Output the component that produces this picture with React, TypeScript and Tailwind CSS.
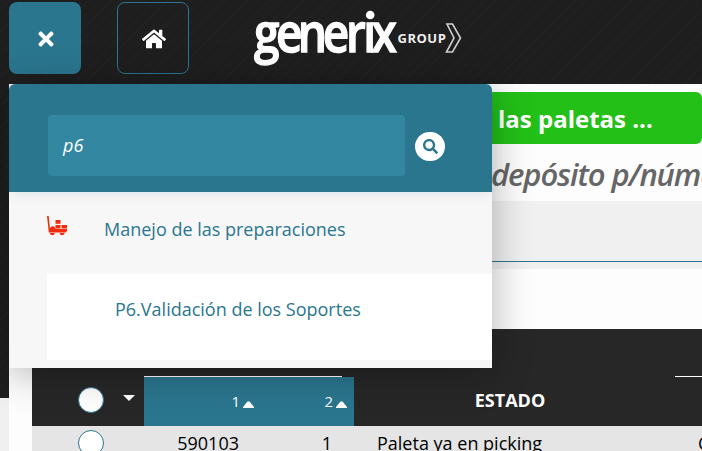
import { FaHome, FaSearch, FaTimes } from "react-icons/fa";

const stripes =
  "bg-[#1e1e1e] bg-[repeating-linear-gradient(135deg,#1e1e1e_0px,#1e1e1e_6px,#222222_7px,#1e1e1e_8px)]";

function Logo() {
  return (
    <svg className="ml-[61px] mt-2 h-[60px] w-[216px]" viewBox="250 8 216 60" fill="#fff" fontFamily="'Open Sans', sans-serif">
      <text
        transform="translate(254 52) scale(.86 1)"
        x="0 25.5 51 80 107 127 136.5"
        fontSize="53.5"
        fontWeight="600"
        stroke="#fff"
        strokeWidth="1.3"
      >
        generıx
      </text>
      <circle cx="370.2" cy="15" r="4.3" />
      <text transform="translate(397.5 42.5)" fontSize="13" fontWeight="700" letterSpacing="0.5" fill="#eee">GROUP</text>
      <path d="M447 24h5.500l8 14-8 14h-6l7.500-14z" fill="none" stroke="#d0d0d0" strokeWidth="1.6" />
    </svg>
  );
}

function Cart() {
  return (
    <svg className="h-5 w-5 shrink-0" viewBox="0 0 20 20" fill="#f02c0c">
      <path d="M0 0h1.700l1.200 12 2-1.700 2.300.2 1.600 2.500H20v2l-1.500 1.500H1.800z" />
      <path d="M8.500 4h5v3.700h-5zM8.500 9h5v3.400h-5zM14.500 9H20v3.400h-5.500z" />
      <path d="M2.800 17h5c-.5 3-4.500 3-5 0M12.600 17h5c-.5 3-4.500 3-5 0" />
    </svg>
  );
}

function Sort() {
  return (
    <svg className="ml-[3px] mt-[6px] h-[7px] w-[11px]" viewBox="0 0 11 7" fill="#fff">
      <path d="M0 7V6L4.500.5h2L11 6v1z" />
    </svg>
  );
}

function Menu() {
  return (
    <div className="absolute left-[9px] top-[84px] z-10 h-[284px] w-[483px] rounded-t-md bg-[#f7f7f7] text-[18px] text-[#2a768f] shadow-[0_5px_40px_rgba(0,0,0,0.3)]">
      <div className="flex h-[108px] items-start rounded-t-md bg-[#2a768f] pl-[39px] pt-[31px] shadow-[0_4px_14px_-4px_rgba(42,118,143,0.18)]">
        <div className="flex h-[61px] w-[357px] items-center rounded bg-[#3487a1] pl-[15px] font-medium italic text-white">p6</div>
        <div className="ml-2.5 mt-[17px] flex h-[29px] w-[30px] items-center justify-center rounded-full bg-white">
          <FaSearch size={15} />
        </div>
      </div>
      <div className="flex h-[82px] items-start pl-[38px] pt-6">
        <Cart />
        <div className="ml-[37px] leading-[27px]">Manejo de las preparaciones</div>
      </div>
      <div className="ml-[38px] h-[86px] bg-white pl-[68px] pt-[22px] leading-[27px]">P6.Validación de los Soportes</div>
    </div>
  );
}

export default function App() {
  return (
    <div className="relative h-[451px] w-[702px] overflow-hidden bg-[#f0f0f0] font-['Open_Sans',sans-serif]">
      <header className={`flex h-[84px] items-start ${stripes}`}>
        <button className="ml-[9px] mt-0.5 flex size-[72px] items-center justify-center rounded-lg bg-[#2a768f] pl-px pt-0.5 text-white">
          <FaTimes size={22} />
        </button>
        <button className="ml-9 mt-0.5 flex size-[72px] items-center justify-center rounded-lg border border-[#2a768f] pl-px pt-0.5 text-white">
          <FaHome size={24} />
        </button>
        <Logo />
      </header>
      <div className="flex">
        <div className={`h-[314px] w-[9px] shrink-0 ${stripes}`} />
        <main className="h-[367px] w-[693px] overflow-hidden bg-[#fdfdfd] pt-2">
          <div className="ml-4 flex h-[52px] items-center whitespace-nowrap rounded-md bg-[#23c018] pl-[473px] pt-0.5 text-2xl font-bold text-white">las paletas ...</div>
          <div className="h-[57px] whitespace-nowrap pl-[482px] pt-[6px] text-[31px] font-[550] italic leading-[48px] tracking-[-1.1px] text-[#666]">depósito p/número</div>
          <div className="h-[68px] bg-[#f0f0f0] pt-[60px]">
            <div className="h-px bg-[#2a768f]" />
          </div>
          <div className="ml-[23px] mt-[60px] h-[97px] bg-[#272727] pt-[47px] text-white">
            <div className="flex h-px">
              <div className="ml-[112px] w-[198px] bg-white" />
              <div className="ml-[333px] w-[27px] bg-white" />
            </div>
            <div className="flex h-[49px]">
              <div className="flex w-[112px] items-start pl-[46px] pt-2.5">
                <div className="size-[26px] rounded-full border border-[#2a768f] bg-white" />
                <svg className="ml-[19px] mt-2 h-1.5 w-3" viewBox="0 0 12 6" fill="#fff"><path d="M0 0h12L6 6z" /></svg>
              </div>
              <div className="flex w-[210px] items-center bg-[#2a768f] text-[15px]">
                <div className="flex w-[110px] items-center justify-end">1<Sort /></div>
                <div className="flex w-[93px] items-center justify-end">2<Sort /></div>
              </div>
              <div className="flex w-[312px] items-center justify-center pb-0.5 text-[18px] font-bold">ESTADO</div>
            </div>
          </div>
          <div className="ml-[23px] flex h-10 bg-[#e5e5e5] text-[18px] leading-[27px] text-black">
            <div className="w-[112px] shrink-0 pl-[46px] pt-1">
              <div className="size-[26px] rounded-full border border-[#2a768f] bg-white" />
            </div>
            <div className="w-[95px] shrink-0 pt-1 text-right">590103</div>
            <div className="w-[93px] shrink-0 pt-1 text-right">1</div>
            <div className="w-[321px] shrink-0 pl-[45px] pt-1">Paleta ya en picking</div>
            <div className="pl-[45px] pt-1">C</div>
          </div>
        </main>
      </div>
      <Menu />
    </div>
  );
}
